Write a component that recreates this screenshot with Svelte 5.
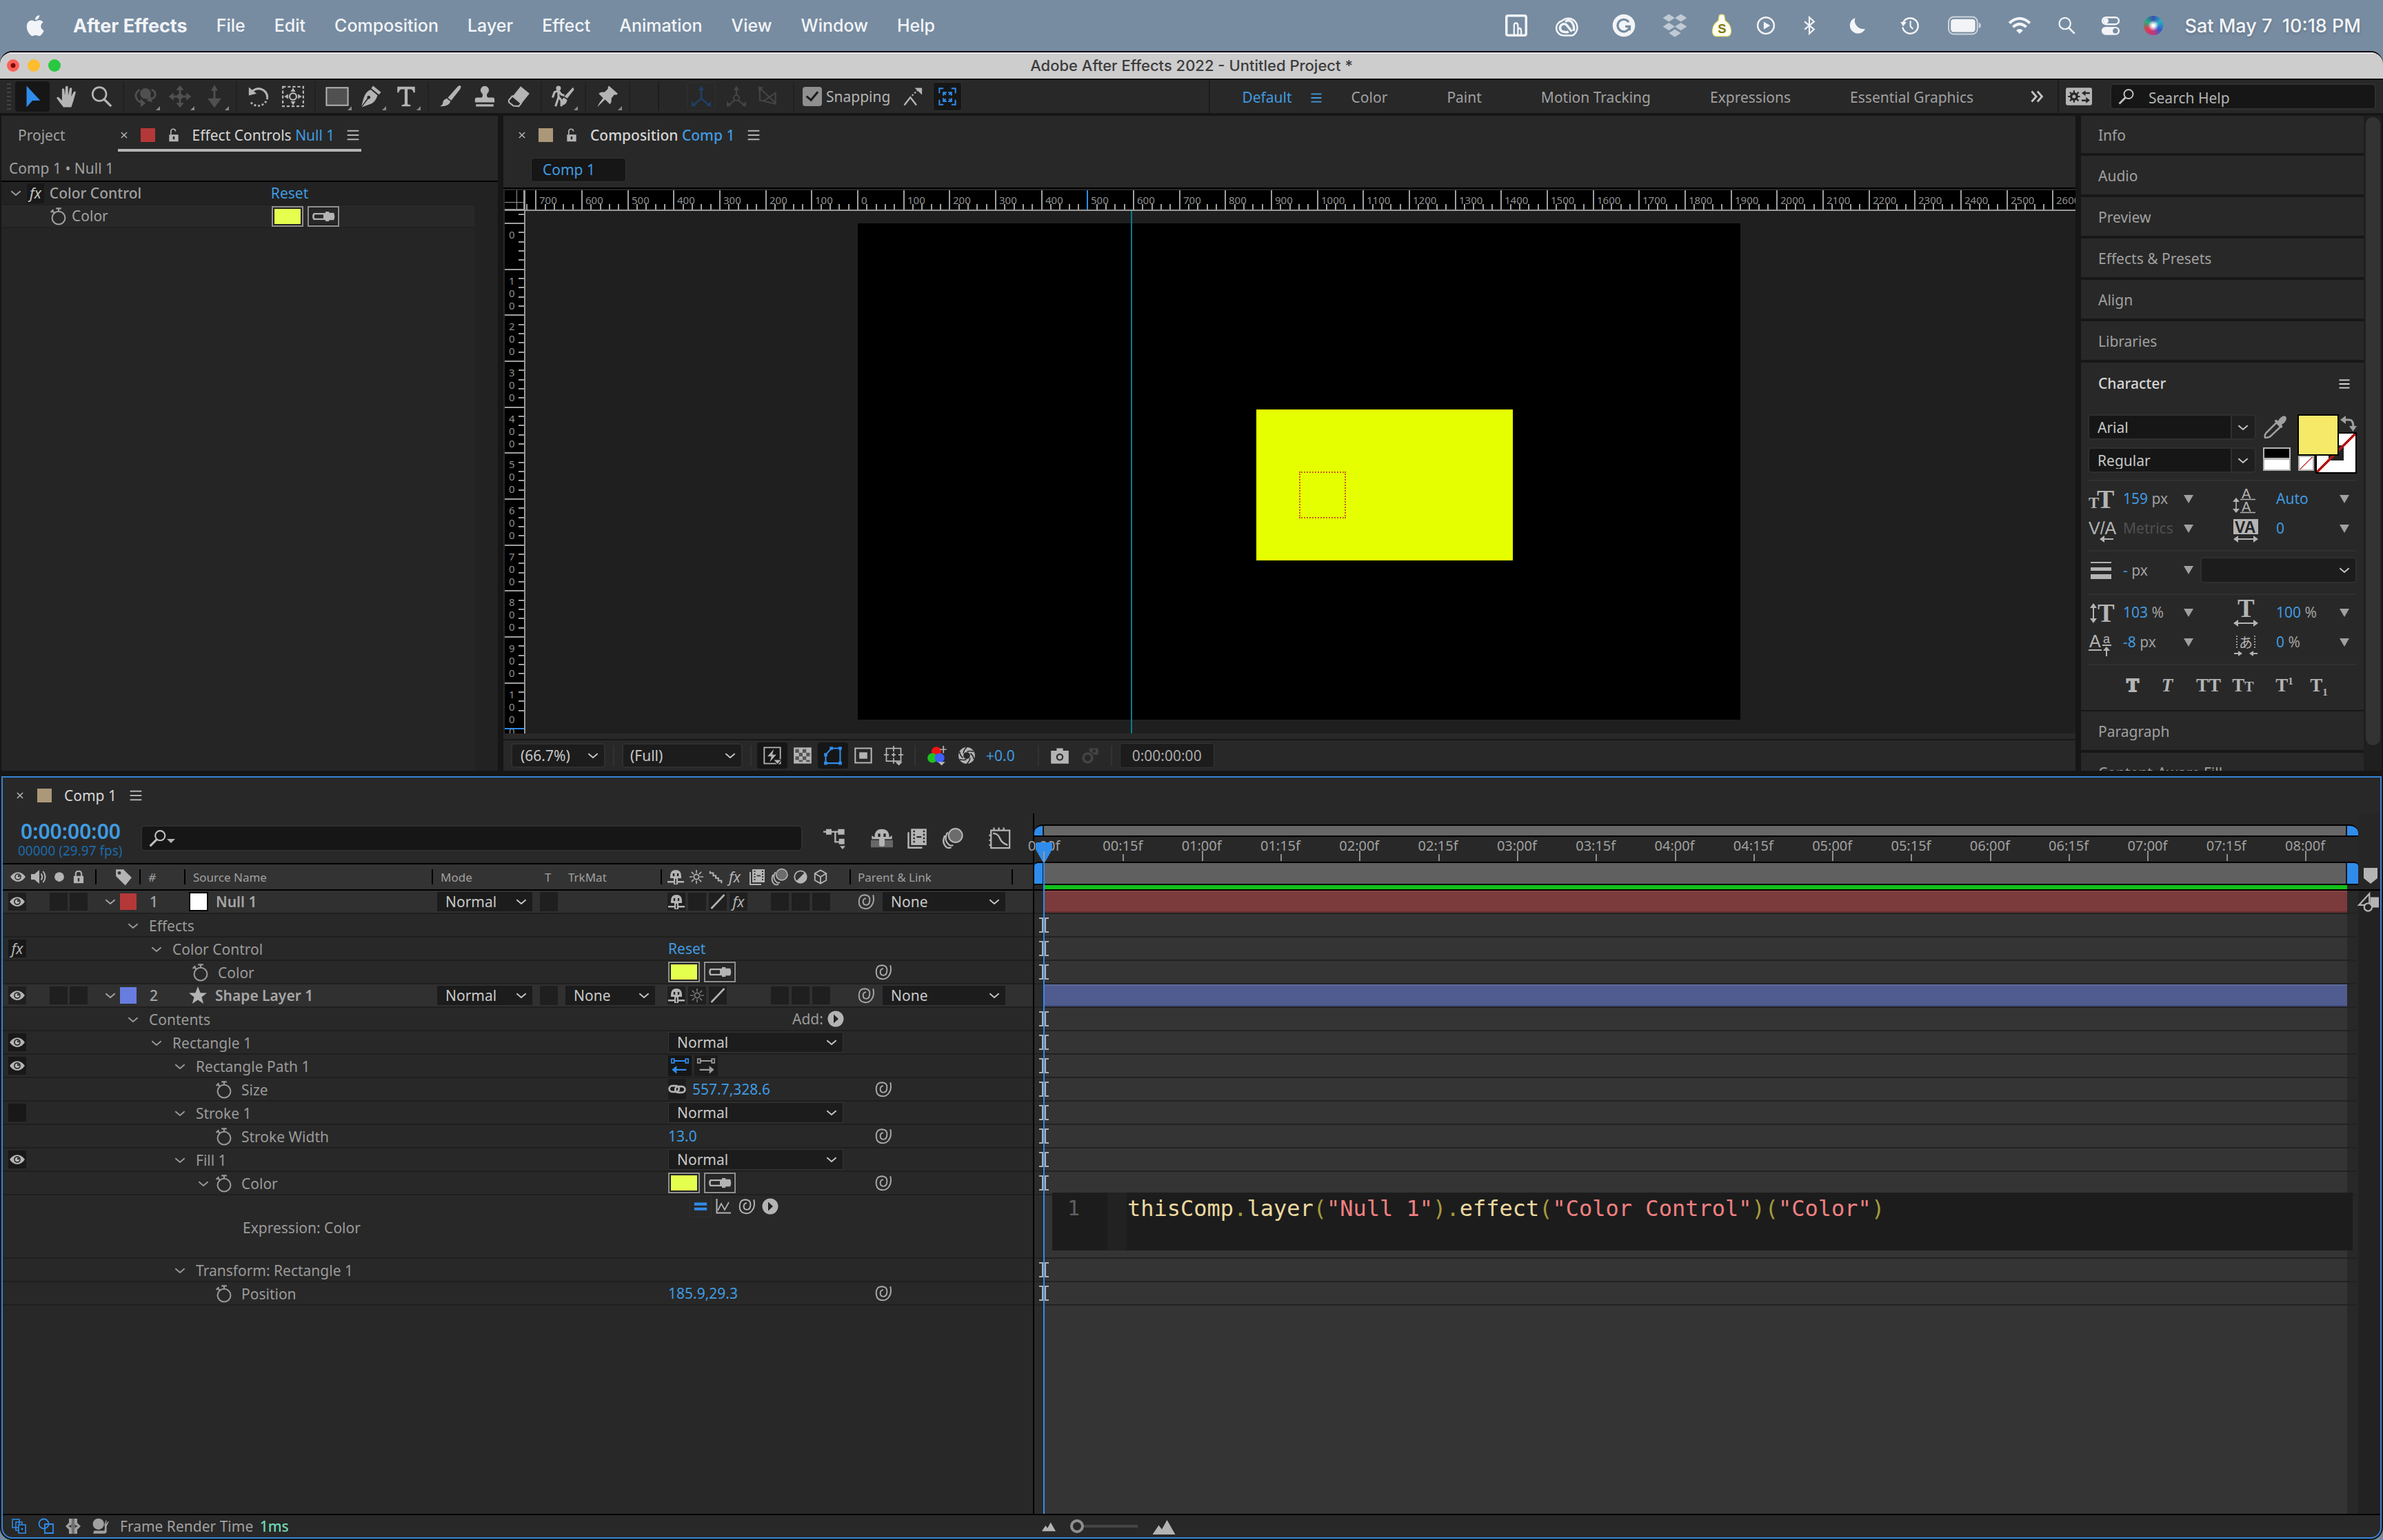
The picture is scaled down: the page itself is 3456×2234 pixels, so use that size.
<script lang="ts">
    type Prop = {
        kind: 'layer' | 'prop' | 'expression';
        name: string;
        level?: number;
        open?: boolean;
        watch?: boolean;
        eye?: 'on' | 'off';
        fx?: boolean;
        value?: 'reset' | 'swatch' | 'add' | 'blend' | 'path' | 'size' | 'number';
        text?: string;
        whip?: boolean;
        num?: number;
        color?: string;
        matte?: boolean;
    };

    const menus = ['File', 'Edit', 'Composition', 'Layer', 'Effect', 'Animation', 'View', 'Window', 'Help'];

    const statusIcons = [
        { name: 'notch', slot: 74, size: 38 },
        { name: 'cloud', slot: 76, size: 38 },
        { name: 'grammar', slot: 86, size: 34 },
        { name: 'dropbox', slot: 62, size: 38 },
        { name: 'bottle', slot: 74, size: 34 },
        { name: 'play', slot: 54, size: 30 },
        { name: 'bluetooth', slot: 72, size: 30 },
        { name: 'moon', slot: 68, size: 28 },
        { name: 'history', slot: 84, size: 30 },
        { name: 'battery', slot: 74, size: 50 },
        { name: 'wifi', slot: 86, size: 34 },
        { name: 'search', slot: 50, size: 28 },
        { name: 'control', slot: 78, size: 30 },
        { name: 'siri', slot: 46, size: 30 }
    ];

    const toolGroups = [
        [['select', 'Selection'], ['hand', 'Hand'], ['search', 'Zoom']],
        [['orbit', 'Orbit'], ['pan', 'Pan'], ['dolly', 'Dolly']],
        [['rotate', 'Rotation'], ['anchor', 'Pan Behind']],
        [['rect', 'Rectangle'], ['pen', 'Pen'], ['type', 'Type']],
        [['brush', 'Brush'], ['stamp', 'Clone Stamp'], ['eraser', 'Eraser']],
        [['roto', 'Roto Brush']],
        [['pin', 'Puppet Pin']]
    ];
    const cornered = ['orbit', 'pan', 'dolly', 'rect', 'pen', 'type', 'roto', 'pin'];

    const workspaces = ['Color', 'Paint', 'Motion Tracking', 'Expressions', 'Essential Graphics'];
    const panels = ['Info', 'Audio', 'Preview', 'Effects & Presets', 'Align', 'Libraries'];

    const rows: Prop[] = [
        { kind: 'layer', name: 'Null 1', num: 1, color: '#b53838' },
        { kind: 'prop', name: 'Effects', level: 1, open: true },
        { kind: 'prop', name: 'Color Control', level: 2, open: true, fx: true, value: 'reset' },
        { kind: 'prop', name: 'Color', level: 3, watch: true, value: 'swatch', whip: true },
        { kind: 'layer', name: 'Shape Layer 1', num: 2, color: '#677de0', matte: true },
        { kind: 'prop', name: 'Contents', level: 1, open: true, value: 'add' },
        { kind: 'prop', name: 'Rectangle 1', level: 2, open: true, eye: 'on', value: 'blend' },
        { kind: 'prop', name: 'Rectangle Path 1', level: 3, open: true, eye: 'on', value: 'path' },
        { kind: 'prop', name: 'Size', level: 4, watch: true, value: 'size', text: '557.7,328.6', whip: true },
        { kind: 'prop', name: 'Stroke 1', level: 3, open: true, eye: 'off', value: 'blend' },
        { kind: 'prop', name: 'Stroke Width', level: 4, watch: true, value: 'number', text: '13.0', whip: true },
        { kind: 'prop', name: 'Fill 1', level: 3, open: true, eye: 'on', value: 'blend' },
        { kind: 'prop', name: 'Color', level: 4, open: true, watch: true, value: 'swatch', whip: true },
        { kind: 'expression', name: 'Expression: Color' },
        { kind: 'prop', name: 'Transform: Rectangle 1', level: 3, open: true },
        { kind: 'prop', name: 'Position', level: 4, watch: true, value: 'number', text: '185.9,29.3', whip: true }
    ];

    // viewer geometry: origin in screen pixels, everything else in comp pixels
    const zoom = 2 / 3;
    const origin = { x: 482, y: 18 };
    const px = (v: number) => Math.round(v * zoom);
    const range = (from: number, to: number, step: number) =>
        Array.from({ length: Math.floor((to - from) / step) + 1 }, (_, i) => from + i * step);

    let viewWidth = 2248;
    let viewHeight = 758;
    $: hTicks = range(-720, (viewWidth - origin.x - 30) / zoom, 20);
    $: vTicks = range(-20, (viewHeight - origin.y - 30) / zoom, 20);

    // half-second marks over an 8s 08f work area
    const totalFrames = 248;
    const marks = range(0, 16, 1).map((i) => ({
        label: i === 0 ? '0:00f' : `0${Math.floor(i / 2)}:${i % 2 ? '15' : '00'}f`,
        left: ((i * 15) / totalFrames) * 100,
        whole: i % 2 === 0
    }));

    let snapping = true;
    let tool = 'select';
    let timeZoom = 0;

    const s = (w: number) => `fill="none" stroke="currentColor" stroke-width="${w}"`;
    const icons: Record<string, string> = {
        apple: '<path d="M16.4 12.7c0-2.3 1.9-3.4 2-3.5-1.100-1.600-2.800-1.800-3.400-1.800-1.400-.1-2.800.9-3.500.9s-1.800-.8-3-.8C7 7.500 5.600 8.400 4.800 9.800c-1.600 2.700-.4 6.800 1.200 9 .8 1.100 1.700 2.300 2.900 2.300s1.600-.7 3-.7 1.800.7 3 .7 2-1.100 2.800-2.200c.9-1.300 1.200-2.500 1.300-2.600-.1 0-2.500-1-2.600-3.600zM14.200 5.900c.6-.8 1-1.800.9-2.900-.9 0-2 .6-2.700 1.400-.6.7-1.100 1.700-.9 2.800 1 .1 2-.5 2.700-1.300z"/>',
        notch: `<rect x="3" y="3" width="18" height="18" rx="1.500" ${s(2.2)}/><path d="M10 21v-9q0-2.200 1.700-2.200T13.500 12v9M13.500 17q0-2.500 1.500-2.500T16.500 17v4" ${s(1.500)}/>`,
        cloud: `<path d="M8 21.200A6.800 6.800 0 0 1 6.500 7.800 8.300 8.300 0 1 1 16 21.200z" ${s(1.600)}/><path d="M12.500 17.500q-1.500 1-4 .3a3.600 3.600 0 1 1 2.500-6l4.500 5.700M9.500 8.500q3.500-2.500 6 .5 2.700 3.500 1.700 8" ${s(2.2)}/>`,
        grammar: '<circle cx="12" cy="12" r="11.500"/><path d="M17 8.500A6.200 6.200 0 1 0 18 13h-4.500M18 12.500V17" fill="none" stroke="#778ca1" stroke-width="2.200"/>',
        dropbox: '<path opacity=".6" d="M6.500 1.500 12 5 6.500 8.500 1 5zM17.500 1.500 23 5l-5.500 3.500L12 5zM6.500 9.500 12 13l-5.500 3.500L1 13zM17.500 9.500 23 13l-5.500 3.500L12 13zM12 15.500l5.500 3.500-5.500 3.500L6.500 19z"/>',
        bottle: '<path fill="#fffef0" stroke="#e8e46a" stroke-width=".8" d="M9.500 1.500q2.500-1.500 5 0l1 5.500q6 4 6 10.500 0 5-3.500 5.500H6q-3.500-.5-3.500-5.500Q2.500 11 8.500 7z"/><text x="8" y="20" font-family="Liberation Sans, sans-serif" font-size="13" font-weight="700" fill="#7d7a10" style="text-shadow: none">S</text>',
        play: `<circle cx="12" cy="12" r="9.500" ${s(2)}/><path d="M9.500 7.500 17 12l-7.500 4.500z"/>`,
        bluetooth: `<path d="m6.500 7.500 11 9L12 21.500v-19l5.500 5-11 9" ${s(1.7)}/>`,
        moon: '<path d="M9 2.500A10 10 0 1 0 21.500 16 10.500 10.500 0 0 1 9 2.500z"/>',
        history: `<path d="M4 9a9 9 0 1 1-.5 5" ${s(2)}/><path d="M1 8h7l-4 5z"/><path d="M12.500 6.500V13l3 3" ${s(1.700)}/>`,
        battery: `<rect x="1" y="6" width="20" height="12" rx="3.500" opacity=".7" ${s(1)}/><rect x="2.500" y="7.500" width="17" height="9" rx="2"/><path d="M22 10v4q1.500-.7 1.500-2T22 10z" opacity=".7"/>`,
        wifi: `<path d="M1.500 9.500q10.500-9.500 21 0M5.200 13.500q6.800-6 13.600 0" ${s(2.8)}/><path d="M8.500 17q3.500-3 7 0L12 20.500z"/>`,
        search: `<circle cx="10" cy="9.500" r="7" ${s(1.900)}/><path d="m15 15 7 7" ${s(2.300)}/>`,
        control: `<rect x="2.500" y="2.500" width="19" height="8" rx="4" ${s(2)}/><circle cx="6.500" cy="6.500" r="3"/><rect x="1.500" y="13.500" width="21" height="9.500" rx="4.700"/><circle cx="17.500" cy="18.200" r="3" fill="#778ca1"/>`,
        select: '<path d="m6 1 14 15-8 .3L6 23z"/>',
        hand: '<path d="M8.500 23Q5 18.500 1.500 13.500q1-1.800 3 0L7 16V4.500q1.300-1.500 2.300 0L10 11l.6-9q1.400-1.500 2.500 0l.3 9 1.500-7.500q1.500-1.200 2.300.2L16.500 12l2.600-5q1.600-.7 2 .7L18.500 17 16.500 23z"/>',
        orbit: `<circle cx="12" cy="9" r="5.500"/><path d="M6 5q-6 4-3 9.500 2 3 6 4M15 15q7-1 7-5t-4-5" ${s(2)}/><path d="m7 14 5 5-5 4zM17 11l-4 5 6 2z"/>`,
        pan: `<path d="M12 4v16M4 12h16" ${s(2)}/><path d="m12 .5 4 5H8zM12 23.500l4-5H8zM.5 12l5-4v8zM23.500 12l-5-4v8z"/><circle cx="12" cy="12" r="3"/>`,
        dolly: `<path d="M12 2v14" ${s(2)}/><path d="m12 0 3.500 6h-7zM5 14h14l-7 9.500z"/>`,
        rotate: `<path d="M4.500 8a9 9 0 0 1 16.500 5" ${s(2.2)}/><path d="M21 13a9.500 9.500 0 0 1-17.500 4" stroke-dasharray="2 2" ${s(2)}/><path d="M2 2.500V11l8-2z"/>`,
        anchor: `<rect x="1.500" y="2" width="21" height="20" stroke-dasharray="3 2" ${s(1.6)}/><circle cx="12" cy="12" r="3.500" ${s(1.6)}/><path d="m12 3 2.500 4h-5zM12 21l2.500-4h-5zM3 12l4-2.500v5zM21 12l-4-2.500v5z"/>`,
        rect: `<rect x="1" y="3" width="22" height="18" fill="#505050" stroke="currentColor" stroke-width="1.400"/>`,
        pen: '<path d="m13.500 1 8 6.500-2 2.500-8-6.500zM11 5l7 5.700Q16 18 10 20l-8 3 6.500-8.500a1.700 1.700 0 1 0-1-.8L1.500 22 4 13Q6 7 11 5z"/>',
        type: '<path d="M3 2h18v6h-1.500q-.5-3.500-3-3.500h-3V19q0 1.500 3 1.500V22H7.500v-1.500q3 0 3-1.500V4.500h-3Q5 4.500 4.500 8H3z"/>',
        brush: '<path d="M22.500 1q1 1-.5 3.500L13 16l-3.500-2.800L19.500 2q2-2 3-1zM8.500 14l3.700 3Q11 22.500 1.500 22q3-1.500 3-4t4-4z"/>',
        stamp: '<path d="M9.500 9a4.300 4.300 0 1 1 5 0q-1 2 .5 4h5q2 0 2 2v3H2v-3q0-2 2-2h5q1.500-2 .5-4zM3 20h18v2.200H3z"/>',
        eraser: `<path d="m13.500 1.500 9 7.500-8 10-9-7.500z"/><path d="m5 11.500 9 7.500-2.500 3-5.500-.5L1.500 18q-.5-2 0-2.500z" ${s(1.500)}/>`,
        roto: `<circle cx="7" cy="3.500" r="2.500"/><path d="m1 13 2-5.500 4-1.500 3 4 3 1M7 6.500V13l-3 9M7 12l3 4v6" ${s(2.2)}/><path d="m23 5-7 9-3-2 9-9.500zM12.500 13l3.500 2.500q-1 6-7 5.500 2-1 1.500-3.500t2-4.500z"/>`,
        pin: '<path d="m13.500 1 9 8q-1 2-3.500 1l-3 4q.5 4-1.500 6l-5-5-8 8q2-5 6-9.500L3 9q2-2 6-1.500L12.500 4q-.5-2 1-3z"/>',
        axes: `<path d="M12 3v11L4 21m8-7 8 7" ${s(2)}/><path d="m12 0 3 5H9zM1.500 23V17l5 5zM22.500 23V17l-5 5z"/>`,
        world: `<path d="M12 3v8M4 21l6-5m10 5-6-5" ${s(1.700)}/><circle cx="12" cy="13.500" r="3" ${s(1.600)}/><path d="m12 0 3 5H9zM1.500 23V17l5 5zM22.500 23V17l-5 5z"/>`,
        view: `<path d="M3 3v13l17 4V8L7 17M4 4l16 15" ${s(1.600)}/><path d="m1 1 6 1-5 5z"/>`,
        snapEdge: `<path d="m2 22 7-9 7 9" ${s(1.900)}/><path d="m11 11 7-7" stroke-dasharray="2 2" ${s(1.800)}/><path d="M14 2h8.500v8z"/>`,
        snapBox: `<path d="M2 8V2h5M17 2h5v6M2 16v6h5M17 22h5v-6M7 11V7h4M17 11V7h-4M7 14v4h4M17 14v4h-4M7 7l3 3M17 7l-3 3M7 18l3-3M17 18l-3-3" ${s(1.700)}/>`,
        more: `<path d="m3 3 8 9-8 9M13 3l8 9-8 9" ${s(3.400)}/>`,
        settings: '<rect y="4" width="24" height="16" rx="1.500"/><g fill="#282828"><circle cx="7.500" cy="12" r="3.800"/><path d="M6.800 6.500h1.400v11H6.800zM2 11.300h11v1.400H2z"/><path d="m3.200 8.500 1-1 8 8-1 1zM11.300 7.500l1 1-8 8-1-1z"/><path d="M18 6.500V8h4v1.600h-4v1.900l-3.500-2.700zM18.500 12.500v2.300h-4v1.600h4v1.900l3.500-2.900z"/></g><circle cx="7.500" cy="12" r="1.600"/>',
        find: `<circle cx="15" cy="8.500" r="6.500" ${s(2)}/><path d="m10.500 13.500-9 9" ${s(2.800)}/>`,
        lockOpen: `<path d="M7 11V6q0-4.500 4-4.500T15 5.500" ${s(2)}/><path d="M4 11h16v12H4z"/><path d="M12 14.500v5" stroke="#282828" stroke-width="3"/>`,
        lock: `<path d="M7 11V7q0-5 5-5t5 5v4" ${s(2.400)}/><path d="M3.500 10.500h17V23h-17z"/><path d="M12 14v6" stroke="#333" stroke-width="3"/>`,
        burger: `<path d="M2 4.500h20M2 12h20M2 19.500h20" ${s(2.400)}/>`,
        close: `<path d="m5 5 14 14M19 5 5 19" ${s(2.600)}/>`,
        chevron: `<path d="m2 8 10 8.500L22 8" ${s(2.800)}/>`,
        watch: `<circle cx="12" cy="14" r="8.700" ${s(1.900)}/><path d="M12 5.500V1M8.500 1.200h7M3 4l3.500 3.500M1.500 6.500 5 3" ${s(2)}/>`,
        dropper: '<path d="M2.500 8.600H14v6.800H2.500Q.3 12 2.500 8.600zm1 1.500q-.9 1.900 0 3.800H12v-3.800z" fill-rule="evenodd"/><path d="M14 7.300h3.500v1.200H22q1.700 3.500 0 7h-4.500v1.200H14z"/>',
        eye: '<path d="M0 12q5-7.500 12-7.500T24 12q-5 7.500-12 7.500T0 12zm12 5.300a5.300 5.300 0 1 0 0-10.600 5.300 5.300 0 0 0 0 10.600z" fill-rule="evenodd"/><circle cx="12" cy="12" r="3.600"/><circle cx="13.500" cy="10.800" r="1.600" fill="#1c1c1c"/>',
        speaker: `<path d="M1 8h5l7-6v20l-7-6H1z"/><path d="M15.500 7.500q3.500 4.500 0 9M18.500 4q6 8 0 16" ${s(2)}/>`,
        dot: '<circle cx="12" cy="12" r="7.500"/>',
        tag: '<path d="M2 2h10l11 11-8.500 10.500L2 11zm4.500 2.500a2.300 2.300 0 1 0 0 4.600 2.300 2.300 0 0 0 0-4.600z" fill-rule="evenodd"/>',
        star: '<path d="m12 0 3.300 8.500 8.700.2-7 5.500 2.600 8.800L12 18l-7.600 5L7 14.200 0 8.700l8.700-.2z"/>',
        shy: '<path d="M4 14V11q0-9 8-9t8 9v3h-5v4h9v2.500h-9V23H9v-2.500H0V18h9v-4z"/><path d="M9 7v4M15 7v4" stroke="#222" stroke-width="2.400"/><path d="M12 15v7" stroke="#222" stroke-width="1.600"/>',
        shyBig: '<path opacity=".45" d="M0 14h24v8H0z"/><path d="M1 13V9l3 2q0-9 8-9t8 9l3-2v4h-8v7q-3 2-6 0v-7z"/><path d="M9 7v3.500M15 7v3.500" stroke="#222" stroke-width="2.400"/>',
        sun: `<circle cx="12" cy="12" r="4" ${s(2)}/><path d="M12 1v5M12 18v5M1 12h5M18 12h5M4.200 4.200l3.500 3.500M16.300 16.300l3.500 3.500M4.200 19.800l3.500-3.500M16.300 7.700l3.500-3.500" ${s(1.800)}/>`,
        jag: `<path d="M2 3v3h5v4h4v4h4v4h5v4" ${s(2.200)}/>`,
        slash: `<path d="M2.500 22 21.500 2" ${s(2.600)}/>`,
        film: '<path d="M1 5h2v17h15v2H1z"/><path d="M5 1h18v19H5zm2.500 2v2h2V3zm0 4v2h2V7zm0 4v2h2v-2zm0 4v2h2v-2zM19 3v2h2V3zm0 4v2h2V7zm0 4v2h2v-2zm0 4v2h2v-2zM11.500 9.500v1.800h5.500V9.500z" fill-rule="evenodd"/>',
        blur: `<circle cx="15.500" cy="9" r="7.500" fill="#6c6c6c" stroke="currentColor" stroke-width="1.500"/><path d="M7 5.500Q2 14 9 19.500q2 1 4 0M4 9q-4 8 2 13 3 1 5 0" ${s(1.700)}/>`,
        half: `<circle cx="12" cy="12" r="9.500" ${s(2)}/><path d="M19 5 5 19a9.800 9.800 0 0 0 14-14z"/>`,
        cube: `<path d="m12 1.500 9 5v11l-9 5-9-5v-11zM3 6.500l9 5.500 9-5.500M12 12v10" ${s(2)}/>`,
        whip: `<path d="M21.500 3q2 9-2 14-3 4.500-8.500 4.500-8.500-.5-8.500-9.500Q2.500 3 10.500 3q6.500.3 6.500 6.500 0 7-5 7-4-.3-4-4.500 0-4 4-4.500" ${s(1.800)}/>`,
        add: '<circle cx="12" cy="12" r="11.500"/><path d="M9 5.500v13l7-6.500z" fill="#222"/>',
        chain: `<rect x="1.500" y="7.500" width="13" height="8" rx="4" ${s(2.600)}/><rect x="9.500" y="8.500" width="13" height="8" rx="4" ${s(2.600)}/>`,
        pathBack: `<path d="M4 6h16M6 17h14" ${s(1.800)}/><path d="M1.500 3.500h3.500v5H1.500zM19 3.500h3.500v5H19z" ${s(1.400)}/><path d="m2 17 6-5v10z"/>`,
        pathFwd: `<path d="M4 6h16M4 17h14" ${s(1.800)}/><path d="M1.500 3.500h3.500v5H1.500zM19 3.500h3.500v5H19z" ${s(1.400)}/><path d="m22 17-6-5v10z"/>`,
        equals: '<path d="M1 5.500h22v5H1zM1 14h22v5H1z"/>',
        graph: `<path d="M2.500 1v20.500H23" ${s(2)}/><path d="m4 18 5-10 5 9 6-11" ${s(1.700)}/>`,
        flow: `<path d="M0 5h20M13 5v11h7" ${s(1.800)}/><path d="M3 2h6v6H3zM16 2h7v6h-7zM17 12.500h6v6h-6zM18 20.500h6l-3 3.500z"/>`,
        curve: `<path d="M3 4h19v18H3zM6 1v3M11 1v3M16 1v3M1 9h2M1 14h2M1 19h2" ${s(1.600)}/><path d="M5 7q5 0 7 5t8 7" ${s(1.700)}/>`,
        marker: '<path d="M2 1h20v15l-10 8L2 16z"/>',
        shapes: `<path d="M14 6h10v12H14z"/><path d="M1 15 13 2v13z" ${s(1.800)}/><circle cx="11.500" cy="17.500" r="4.500" fill="#222" stroke="currentColor" stroke-width="1.800"/>`,
        draft: `<path d="M2 2h20v20H2z" ${s(1.600)}/><path d="M14 4 6 13h5l-2 7 8-9h-5z"/><path d="M13 17h11l-5.500 6z" stroke="#161616"/>`,
        checker: '<path d="M1 2h22v20H1z"/><path fill="#555" d="M3 4h4.500v4.500H3zM12 4h4.500v4.500H12zM7.500 8.500H12V13H7.500zM16.500 8.500H21V13h-4.500zM3 13h4.500v4.500H3zM12 13h4.500v4.500H12zM7.500 17.500H12V20H7.500zM16.500 17.500H21V20h-4.500z"/>',
        mask: `<path d="M3 21.500V11l7-8h11v18.500z" ${s(1.800)}/><path d="M1 19.500h4v4H1zM19 19.500h4v4h-4zM19 1h4v4h-4zM8 1h4v4H8zM1 9h4v4H1z"/>`,
        region: `<path d="M2 3h20v18H2z" ${s(1.800)}/><path d="M7 8h10v8H7z"/>`,
        grid: `<path d="M3 3h18v16H3zM12 0v7M12 15v7M0 11h6M18 11h6M12 8.500v5M9.500 11h5" ${s(1.500)}/><path d="M14 20h9l-4.500 4.500z"/>`,
        rgb: '<circle cx="12" cy="7" r="6" fill="#f01414"/><circle cx="7" cy="15" r="6" fill="#1fc01f"/><circle cx="16" cy="15" r="6" fill="#3f5fff"/><path d="M20 0h1.500v9H20zM16.500 3.800h8v1.400h-8z"/><path d="M14 20h9l-4.500 4.500z"/>',
        shutter: '<circle cx="12" cy="12" r="11"/><circle cx="12" cy="12" r="4.500" fill="#282828"/><path d="M12 1q-4 3-4.500 8M21.500 7q-5-2-9 0M21.500 17q-.5-5-4.500-8M12 23q4-3 4.500-8M2.500 17q5 2 9 0M2.500 7q.5 5 4.500 8" fill="none" stroke="#282828" stroke-width="1.500"/>',
        camera: '<path d="M8 3h8v3h7v16H1V6h7zm4 6.500a4.500 4.500 0 1 0 0 9 4.500 4.500 0 0 0 0-9z" fill-rule="evenodd"/><circle cx="12" cy="14" r="2.700"/>',
        showSnap: `<circle cx="9" cy="15" r="5.500" ${s(3)}/><path d="M11 3h11v8h-6q-1-3-5-4z"/><circle cx="17" cy="6.500" r="2" fill="#282828"/>`,
        eyedrop: `<path d="m13 8 4 4L7 21.500q-3 1.500-5 1-.8-2.200 1-4.500z" ${s(1.700)}/><path d="M11 6.500 12.500 5l2 1.500Q17 2 20.500 1.500 23 2 22.500 5q-1 3-4.500 5l1 2-1.500 1.500z"/>`,
        swap: `<path d="M7 6h6q6 0 6 10" ${s(3)}/><path d="m0 6 8-6v12zM13 15h11l-5.500 8z"/>`,
        layersFoot: `<path d="M2 2h10v12H2zM7 6h9v12H7z" ${s(1.500)}/><path d="M11 10h10v12H11z" fill="#222" stroke="currentColor" stroke-width="1.700"/><circle cx="16" cy="16" r="1.500"/>`,
        modesFoot: `<circle cx="8.500" cy="8.500" r="7" ${s(1.800)}/><path d="M10 9h12v13H10z" ${s(1.800)}/>`,
        bracesFoot: '<path d="M9 1h6v22H9z" opacity=".6"/><path d="M6 1h4v6q0 4-5 5 5 1 5 5v6H6v-6L1 12l5-5zM18 1h-4v6q0 4 5 5-5 1-5 5v6h4v-6l5-5-5-5z"/>',
        snailFoot: '<circle cx="9" cy="9" r="7.500"/><path d="M3 18h14q1-5 0-8l2-6 1 .5-1 5 3-4 1 .5-3 6v7q0 3-4 3H2z"/>',
        hill: '<path d="m1 20 6-9 3 4 5-9 8 14z"/>'
    };

    // Character panel glyphs, on a 40x40 grid
    const bold = 'font-family="Liberation Serif, serif" font-weight="700"';
    const plain = 'font-family="Liberation Sans, sans-serif"';
    const glyphs: Record<string, string> = {
        size: `<text x="0" y="33" font-size="23" ${bold}>T</text><text x="12" y="33" font-size="38" ${bold}>T</text>`,
        lead: `<text x="14" y="19" font-size="20" ${plain}>A</text><text x="14" y="38" font-size="20" ${plain}>A</text><path d="M12 20.500h22M12 39.500h22M6 22v15" ${s(1.600)}/><path d="m6 18 5 6H1zM6 40l5-6H1z"/>`,
        kern: `<text x="0" y="28" font-size="25" ${plain}>V/A</text><path d="M20 35h16" ${s(2)}/><path d="m16 35 7-5v10z"/>`,
        track: `<path d="M2 6h36v22H2z"/><text x="4" y="26" font-size="23" font-weight="700" fill="#222" ${plain}>VA</text><path d="M7 35h26" ${s(2)}/><path d="m2 35 7-5v10zM38 35l-7-5v10z"/>`,
        stroke: '<path d="M3 8h30v2H3zM3 16h30v5H3zM3 26h30v7H3z"/>',
        vscale: `<text x="13" y="33" font-size="37" ${bold}>T</text><path d="M7 12v18" ${s(2)}/><path d="m7 6 5 7H2zM7 35l5-7H2z"/>`,
        hscale: `<text x="8" y="26" font-size="37" ${bold}>T</text><path d="M7 35h26" ${s(2)}/><path d="m2 35 7-5v10zM38 35l-7-5v10z"/>`,
        shift: `<text x="1" y="27" font-size="25" ${plain}>A</text><text x="21" y="21" font-size="18" ${plain}>a</text><path d="M0 31h19M20 24h13M26 40V29" ${s(2)}/><path d="m26 26 5 6H21z"/>`,
        tsume: `<text x="10" y="28" font-size="20" font-family="Noto Sans CJK JP, sans-serif">あ</text><path d="M7 10v20M33 10v20" stroke-dasharray="2 2" ${s(1.600)}/><path d="M3 36h8M29 36h8" ${s(2)}/><path d="m15 36-6-4v8zM25 36l6-4v8z"/>`
    };
</script>

{#snippet icon(name: string, size = 24)}
    <svg class="icon" viewBox="0 0 24 24" width={size} height={size} fill="currentColor" aria-hidden="true">{@html icons[name]}</svg>
{/snippet}

{#snippet select(label: string, value: string, kind: string)}
    <span class="select {kind}">
        <select aria-label={label}><option>{value}</option></select>
        {@render icon('chevron', 16)}
    </span>
{/snippet}

{#snippet swatch()}
    <span class="swatches">
        <button class="swatch" aria-label="Color"></button>
        <button class="pick" aria-label="Pick color">{@render icon('dropper', 36)}</button>
    </span>
{/snippet}

{#snippet charValue(glyph: string, label: string, value: string, unit: string)}
    <div class="char-cell">
        <svg class="char-icon" viewBox="0 0 40 40" width="40" height="40" fill="currentColor" aria-hidden="true">{@html glyphs[glyph]}</svg>
        <button class="char-num" aria-label={label}><span class:dim={label === 'Kerning'}>{value}</span> {unit}</button>
        <button class="arrow" aria-label="{label} presets"></button>
    </div>
{/snippet}

<div class="desktop">
    <header class="menubar">
        <nav>
            <button class="apple" aria-label="Apple">{@render icon('apple', 40)}</button>
            <button class="app">After Effects</button>
            {#each menus as menu}<button>{menu}</button>{/each}
        </nav>
        <div class="status">
            {#each statusIcons as item}
                <span class="slot" style="width: {item.slot}px">
                    {#if item.name === 'siri'}<span class="siri"></span>{:else}{@render icon(item.name, item.size)}{/if}
                </span>
            {/each}
            <time>Sat May 7&nbsp; 10:18 PM</time>
        </div>
    </header>

    <div class="window">
        <div class="titlebar">
            <div class="lights">
                <button class="red" aria-label="Close"></button>
                <button class="amber" aria-label="Minimize"></button>
                <button class="green" aria-label="Zoom"></button>
            </div>
            <h1>Adobe After Effects 2022 - Untitled Project *</h1>
        </div>

        <div class="toolbar">
            <span class="grip"></span>
            {#each toolGroups as group, g}
                <div class="tools" class:faded={g === 1}>
                    {#each group as [name, label]}
                        <button class="tool" class:active={tool === name} class:corner={cornered.includes(name)} aria-label={label} on:click={() => (tool = name)}>
                            {@render icon(name, 34)}
                        </button>
                    {/each}
                </div>
            {/each}
            <div class="axes">
                <span class="boxed">{@render icon('axes', 32)}</span>
                {@render icon('world', 32)}
                {@render icon('view', 32)}
            </div>
            <div class="snap">
                <label><input type="checkbox" bind:checked={snapping} />Snapping</label>
                {@render icon('snapEdge', 30)}
                <span class="boxed">{@render icon('snapBox', 28)}</span>
            </div>
            <nav class="workspaces">
                <button class="current">Default</button>
                <button class="current ws-menu" aria-label="Workspace menu">{@render icon('burger', 18)}</button>
                {#each workspaces as name}<button>{name}</button>{/each}
            </nav>
            <button class="more" aria-label="More workspaces">{@render icon('more', 20)}</button>
            <div class="help">
                {@render icon('settings', 38)}
                <label class="searchbox">
                    {@render icon('find', 24)}
                    <input type="text" placeholder="Search Help" aria-label="Search Help" />
                </label>
            </div>
        </div>

        <div class="upper">
            <section class="panel effects">
                <div class="tabs">
                    <button class="project">Project</button>
                    <div class="tab underlined">
                        {@render icon('close', 14)}
                        <span class="chip red-chip"></span>
                        {@render icon('lockOpen', 20)}
                        <span class="tab-title">Effect Controls <span class="blue">Null 1</span></span>
                        {@render icon('burger', 20)}
                    </div>
                </div>
                <p class="crumb">Comp 1 • Null 1</p>
                <div class="effect-body">
                    <div class="effect-list">
                        <div class="effect-row head">
                            {@render icon('chevron', 16)}
                            <span class="fx dark">fx</span>
                            <span class="effect-name">Color Control</span>
                            <a href="#reset">Reset</a>
                        </div>
                        <div class="effect-row">
                            <span class="effect-watch">{@render icon('watch', 26)}</span>
                            <span class="effect-prop">Color</span>
                            {@render swatch()}
                        </div>
                    </div>
                    <div class="effect-gutter"></div>
                </div>
            </section>

            <section class="panel comp">
                <div class="tabs">
                    <div class="tab">
                        {@render icon('close', 14)}
                        <span class="chip tan-chip"></span>
                        {@render icon('lockOpen', 20)}
                        <span class="tab-title strong">Composition <span class="blue">Comp 1</span></span>
                        {@render icon('burger', 20)}
                    </div>
                </div>
                <div class="flowbar"><button>Comp 1</button></div>
                <div class="viewer">
                    <div class="ruler-corner"></div>
                    <svg class="ruler-h" aria-hidden="true">
                        {#each hTicks as t}
                            <line x1={origin.x + px(t)} x2={origin.x + px(t)} y1={t % 100 === 0 ? 0 : 20} y2="30" class:mark={t === 500} />
                            {#if t % 100 === 0}<text x={origin.x + px(t) + 5} y="20">{Math.abs(t)}</text>{/if}
                        {/each}
                    </svg>
                    <svg class="ruler-v" aria-hidden="true">
                        {#each vTicks as t}
                            <line x1={t % 100 === 0 ? 0 : 20} x2="30" y1={origin.y + px(t)} y2={origin.y + px(t)} />
                            {#if t % 100 === 0}
                                {#each String(t).split('') as digit, i}
                                    <text x="6" y={origin.y + px(t) + 22 + i * 18}>{digit}</text>
                                {/each}
                            {/if}
                        {/each}
                        <line class="mark" x1="0" x2="30" y1={origin.y + px(1100)} y2={origin.y + px(1100)} />
                    </svg>
                    <div class="viewport" bind:clientWidth={viewWidth} bind:clientHeight={viewHeight}>
                        <div class="stage" style="left: {origin.x}px; top: {origin.y}px; width: {px(1920)}px; height: {px(1080)}px">
                            <div class="shape" style="left: {px(867)}px; top: {px(405)}px; width: {px(558)}px; height: {px(329)}px"></div>
                            <div class="null" style="left: {px(960)}px; top: {px(540)}px; width: {px(102)}px; height: {px(102)}px"></div>
                        </div>
                        <div class="guide" style="left: {origin.x + px(594)}px"></div>
                    </div>
                </div>
                <div class="viewbar">
                    {@render select('Magnification', '(66.7%)', 'zoom')}
                    <i></i>
                    {@render select('Resolution', '(Full)', 'res')}
                    <i></i>
                    <div class="viewtools">
                        <button class="dark" aria-label="Fast previews">{@render icon('draft', 28)}</button>
                        <button aria-label="Transparency grid">{@render icon('checker', 28)}</button>
                        <button class="dark lit" aria-label="Mask visibility">{@render icon('mask', 28)}</button>
                        <button aria-label="Region of interest">{@render icon('region', 28)}</button>
                        <button aria-label="Grid and guides">{@render icon('grid', 28)}</button>
                    </div>
                    <i></i>
                    <div class="viewtools exposure">
                        <button aria-label="Channels">{@render icon('rgb', 28)}</button>
                        <button aria-label="Reset exposure">{@render icon('shutter', 26)}</button>
                        <a href="#exposure">+0.0</a>
                    </div>
                    <i></i>
                    <div class="viewtools">
                        <button aria-label="Take snapshot">{@render icon('camera', 28)}</button>
                        <button class="off" aria-label="Show snapshot">{@render icon('showSnap', 28)}</button>
                    </div>
                    <i></i>
                    <button class="timebox">0:00:00:00</button>
                </div>
            </section>

            <section class="panel side">
                <div class="side-list">
                    {#each panels as name}<h2>{name}</h2>{/each}
                    <div class="character">
                        <h2 class="on">Character {@render icon('burger', 18)}</h2>
                        <div class="fonts">
                            <div class="font-selects">
                                {@render select('Font family', 'Arial', 'font')}
                                {@render select('Font style', 'Regular', 'font')}
                            </div>
                            <div class="font-pick">
                                {@render icon('eyedrop', 36)}
                                <button class="bw" aria-label="Black or white"></button>
                            </div>
                            <div class="fillstroke">
                                <button class="stroke" aria-label="Stroke color"></button>
                                <button class="fill" aria-label="Fill color"></button>
                                <button class="none" aria-label="No color"></button>
                                <span class="swap">{@render icon('swap', 24)}</span>
                            </div>
                        </div>
                        <div class="char-grid">
                            {@render charValue('size', 'Font size', '159', 'px')}
                            {@render charValue('lead', 'Leading', 'Auto', '')}
                            {@render charValue('kern', 'Kerning', 'Metrics', '')}
                            {@render charValue('track', 'Tracking', '0', '')}
                        </div>
                        <div class="char-grid single">
                            {@render charValue('stroke', 'Stroke width', '-', 'px')}
                            {@render select('Stroke order', '', 'order')}
                        </div>
                        <div class="char-grid">
                            {@render charValue('vscale', 'Vertical scale', '103', '%')}
                            {@render charValue('hscale', 'Horizontal scale', '100', '%')}
                            {@render charValue('shift', 'Baseline shift', '-8', 'px')}
                            {@render charValue('tsume', 'Tsume', '0', '%')}
                        </div>
                        <div class="faux">
                            <button class="heavy">T</button>
                            <button><em>T</em></button>
                            <button>TT</button>
                            <button>T<small>T</small></button>
                            <button>T<sup>1</sup></button>
                            <button>T<sub>1</sub></button>
                        </div>
                    </div>
                    <h2>Paragraph</h2>
                    <h2>Content-Aware Fill</h2>
                </div>
                <div class="side-scroll"><span></span></div>
            </section>
        </div>

        <section class="timeline">
            <div class="tab comp-tab">
                {@render icon('close', 14)}
                <span class="chip tan-chip"></span>
                <span class="tab-title">Comp 1</span>
                {@render icon('burger', 20)}
            </div>

            <div class="time-body">
                <div class="outline">
                    <div class="time-controls">
                        <div class="timecode"><strong>0:00:00:00</strong><span>00000 (29.97 fps)</span></div>
                        <label class="searchbox">
                            {@render icon('find', 26)}<span class="tri"></span>
                            <input type="text" aria-label="Search layers" />
                        </label>
                        <div class="comp-switches">
                            <button aria-label="Mini-flowchart">{@render icon('flow', 32)}</button>
                            <button aria-label="Shy">{@render icon('shyBig', 32)}</button>
                            <button aria-label="Frame blending">{@render icon('film', 30)}</button>
                            <button aria-label="Motion blur">{@render icon('blur', 32)}</button>
                            <button class="apart" aria-label="Graph editor">{@render icon('curve', 34)}</button>
                        </div>
                    </div>

                    <div class="columns">
                        <span class="c-av">
                            {@render icon('eye', 22)}{@render icon('speaker', 24)}{@render icon('dot', 22)}{@render icon('lock', 20)}
                        </span>
                        <span class="c-label">{@render icon('tag', 26)}</span>
                        <span class="c-num">#</span>
                        <span class="c-name">Source Name</span>
                        <span class="c-mode"><span>Mode</span><span>T</span><span>TrkMat</span></span>
                        <span class="c-switch">
                            {@render icon('shy', 24)}{@render icon('sun', 22)}{@render icon('jag', 22)}<em>fx</em>{@render icon('film', 24)}{@render icon('blur', 26)}{@render icon('half', 22)}{@render icon('cube', 22)}
                        </span>
                        <span class="c-parent">Parent &amp; Link</span>
                    </div>

                    {#each rows as row}
                        {#if row.kind === 'layer'}
                            <div class="row layer">
                                <div class="av">
                                    <span class="box">{@render icon('eye', 22)}</span>
                                    <span class="box push"></span><span class="box"></span>
                                </div>
                                <div class="layer-name">
                                    {@render icon('chevron', 16)}
                                    <span class="layer-chip" style="background: {row.color}"></span>
                                    <span class="layer-num">{row.num}</span>
                                    {#if row.num === 1}<span class="solid-icon"></span>{:else}<span class="star-icon">{@render icon('star', 26)}</span>{/if}
                                    <span>{row.name}</span>
                                </div>
                                <div class="modes">
                                    {@render select('Mode', 'Normal', 'mode')}
                                    <span class="box"></span>
                                    {#if row.matte}{@render select('Track matte', 'None', 'matte')}{/if}
                                </div>
                                <div class="switches">
                                    <span class="box">{@render icon('shy', 24)}</span>
                                    <span class="box" class:mute={row.matte}>{#if row.matte}{@render icon('sun', 22)}{/if}</span>
                                    <span class="box">{@render icon('slash', 24)}</span>
                                    {#if row.matte}<span class="box clear"></span>{:else}<span class="box fx">fx</span>{/if}
                                    <span class="box clear"></span>
                                    <span class="box"></span><span class="box"></span><span class="box"></span>
                                </div>
                                <div class="parent">
                                    {@render icon('whip', 26)}
                                    {@render select('Parent', 'None', 'link')}
                                </div>
                            </div>
                        {:else if row.kind === 'prop'}
                            <div class="row">
                                <div class="av">
                                    {#if row.fx}<span class="box fx dark">fx</span>{/if}
                                    {#if row.eye}<span class="box dark">{#if row.eye === 'on'}{@render icon('eye', 22)}{/if}</span>{/if}
                                </div>
                                <div class="prop-name" style="padding-left: {12 + 34 * (row.level ?? 1)}px">
                                    <span class="twirl">{#if row.open}{@render icon('chevron', 16)}{/if}</span>
                                    {#if row.watch}<span class="watch">{@render icon('watch', 26)}</span>{/if}
                                    <span>{row.name}</span>
                                </div>
                                <div class="prop-value">
                                    {#if row.value === 'reset'}<a href="#reset">Reset</a>
                                    {:else if row.value === 'swatch'}{@render swatch()}
                                    {:else if row.value === 'add'}<button class="adder">Add: {@render icon('add', 24)}</button>
                                    {:else if row.value === 'blend'}{@render select('Blend mode', 'Normal', 'blend')}
                                    {:else if row.value === 'path'}
                                        <button class="dir lit" aria-label="Reverse path off">{@render icon('pathBack', 28)}</button>
                                        <button class="dir" aria-label="Reverse path on">{@render icon('pathFwd', 28)}</button>
                                    {:else if row.value === 'size'}<span class="link-box">{@render icon('chain', 26)}</span><a href="#value">{row.text}</a>
                                    {:else if row.text}<a href="#value">{row.text}</a>{/if}
                                </div>
                                {#if row.whip}{@render icon('whip', 26)}{/if}
                            </div>
                        {:else}
                            <div class="row expression">
                                <span class="exp-name">{row.name}</span>
                                <div class="exp-tools">
                                    <button class="eq" aria-label="Enable expression">{@render icon('equals', 20)}</button>
                                    <button aria-label="Show graph">{@render icon('graph', 24)}</button>
                                    <button aria-label="Pick whip">{@render icon('whip', 26)}</button>
                                    <button aria-label="Expression language menu">{@render icon('add', 24)}</button>
                                </div>
                            </div>
                        {/if}
                    {/each}
                </div>

                <div class="graph">
                    <div class="navigator"><span></span></div>
                    <div class="time-ruler">
                        {#each marks as mark}
                            <span class="time-mark" class:whole={mark.whole} style="left: {mark.left}%">{mark.label}</span>
                        {/each}
                    </div>
                    <div class="workarea"><span></span></div>
                    <div class="cache"><span></span></div>
                    <div class="tracks">
                        {#each rows as row}
                            <div class="track {row.kind}">
                                {#if row.kind === 'layer'}
                                    <span class="clip" class:second={row.matte}></span>
                                {:else if row.kind === 'prop'}
                                    <svg class="ibeam" viewBox="0 0 14 22" width="14" height="22" aria-hidden="true"><path d="M0 1h14M0 21h14M5 1v20M9 1v20" fill="none" stroke="#b0b0b0" stroke-width="2" /></svg>
                                {:else}
                                    <div class="editor">
                                        <span class="line-no">1</span>
                                        <code>thisComp<s>.</s>layer<s>(</s><q>"Null 1"</q><s>).</s>effect<s>(</s><q>"Color Control"</q><s>)(</s><q>"Color"</q><s>)</s></code>
                                    </div>
                                {/if}
                            </div>
                        {/each}
                    </div>
                    <div class="playhead"><svg viewBox="0 0 24 28" width="24" height="28" aria-hidden="true"><path d="M0 2q0-2 2-2h20q2 0 2 2v8L14 28h-4L0 10z" fill="#2f8ceb" /><path d="M12 13v15" stroke="#9a9a9a" stroke-width="2" /></svg></div>
                </div>

                <div class="markers">
                    <span class="comp-marker">{@render icon('marker', 24)}</span>
                    <span class="button-marker">{@render icon('shapes', 30)}</span>
                </div>
            </div>

            <footer>
                <div class="foot-left">
                    <span class="lit">{@render icon('layersFoot', 24)}</span>
                    <span class="lit">{@render icon('modesFoot', 24)}</span>
                    {@render icon('bracesFoot', 24)}
                    {@render icon('snailFoot', 26)}
                    <span>Frame Render Time <b>1ms</b></span>
                </div>
                <div class="foot-zoom">
                    {@render icon('hill', 22)}
                    <input type="range" min="0" max="100" bind:value={timeZoom} aria-label="Time zoom" />
                    {@render icon('hill', 36)}
                </div>
            </footer>
        </section>
    </div>
</div>

<style>
    :global(body) {
        margin: 0;
        background: #778ca1;
    }

    .desktop {
        --blue: #409be0;
        --text: #a0a0a0;
        --bright: #d6d6d6;
        --panel: #282828;
        --gap: #161616;
        display: flex;
        flex-direction: column;
        height: 100vh;
        font: 21px/1 "Noto Sans", sans-serif;
        color: var(--text);
        overflow: hidden;
    }

    button,
    input,
    select {
        font: inherit;
        color: inherit;
        background: none;
        border: 0;
        padding: 0;
        margin: 0;
        outline: 0;
    }

    button,
    span,
    a {
        white-space: nowrap;
    }

    h1, h2, p {
        margin: 0;
        font-weight: 400;
        font-size: inherit;
    }

    a {
        color: var(--blue);
        text-decoration: none;
    }

    .icon {
        display: block;
        flex: none;
        overflow: visible;
    }

    .blue { color: var(--blue); }

    .lit { color: #2f8ceb; }

    /* menu bar */
    .menubar {
        flex: none;
        display: flex;
        justify-content: space-between;
        align-items: center;
        height: 74px;
        padding: 0 32px;
        background: #778ca1;
        color: #f2f4f7;
        font: 500 25px/1 Inter, sans-serif;
        text-shadow: 0 2px 4px rgb(0 0 0 / 0.2);
    }

    .menubar nav {
        display: flex;
        align-items: center;
        gap: 42px;
    }

    .menubar .apple { margin-right: -8px; }

    .menubar .app {
        font-size: 27px;
        font-weight: 700;
    }

    .status {
        display: flex;
        align-items: center;
    }

    .slot {
        display: flex;
        justify-content: center;
    }

    .siri {
        width: 28px;
        height: 28px;
        border-radius: 50%;
        background: radial-gradient(circle at 50% 50%, #fff 8%, transparent 40%), conic-gradient(#3a4fb0, #2ab0c0, #2a5fd0, #c03a80, #e03a50, #1fb080, #3a4fb0);
    }

    .status time {
        padding-left: 23px;
        font-size: 27px;
        white-space: nowrap;
    }

    /* window */
    .window {
        flex: 1;
        min-height: 0;
        display: flex;
        flex-direction: column;
        background: var(--gap);
        border-top: 2px solid #000;
        border-radius: 18px;
        overflow: hidden;
        padding-bottom: 2px;
    }

    .titlebar {
        flex: none;
        display: grid;
        grid-template-columns: 1fr auto 1fr;
        align-items: center;
        height: 38px;
        background: #cdcdcd;
        border-bottom: 2px solid #000;
        box-shadow: inset 0 2px #e9e3ee;
        color: #3c3c3c;
        font: 500 22px/1 Inter, sans-serif;
    }

    .titlebar h1 { font-weight: 500; }

    .lights {
        display: flex;
        gap: 12px;
        padding-left: 10px;
    }

    .lights button {
        width: 18px;
        height: 18px;
        border-radius: 50%;
    }

    .red { background: radial-gradient(circle, #7a0c08 3px, #ff5f57 4px); }
    .amber { background: #febc2e; }
    .green { background: #28c840; }

    .toolbar {
        flex: none;
        display: flex;
        align-items: center;
        height: 48px;
        background: var(--panel);
        color: #b4b4b4;
    }

    .grip {
        width: 6px;
        height: 38px;
        margin-left: 10px;
        background: repeating-linear-gradient(#444 0 2px, transparent 2px 6px);
    }

    .tools {
        display: flex;
        padding: 0 6px;
        border-right: 2px solid #212121;
    }

    .faded { color: #505050; }

    .tool {
        position: relative;
        display: flex;
        align-items: center;
        justify-content: center;
        width: 50px;
        height: 44px;
        border-radius: 4px;
    }

    .tool.active {
        color: #2f8ceb;
        background: #161616;
    }

    .corner::after {
        content: '';
        position: absolute;
        right: 4px;
        bottom: 2px;
        border: 3px solid;
        border-color: transparent #8a8a8a #8a8a8a transparent;
    }

    .axes {
        display: flex;
        align-items: center;
        gap: 14px;
        margin-left: 40px;
        padding: 0 20px 0 40px;
        border-left: 2px solid #1c1c1c;
        border-right: 2px solid #212121;
        color: #444;
    }

    .boxed {
        display: flex;
        align-items: center;
        justify-content: center;
        width: 42px;
        height: 42px;
        border-radius: 4px;
        border: 1px solid #303030;
        color: #1f3f66;
        box-sizing: border-box;
    }

    .snap {
        display: flex;
        align-items: center;
        gap: 14px;
        padding-left: 12px;
    }

    .snap label {
        display: flex;
        align-items: center;
        gap: 6px;
        margin-right: 4px;
    }

    .snap input {
        appearance: none;
        position: relative;
        width: 28px;
        height: 28px;
        border-radius: 4px;
        background: #8f8f8f;
    }

    .snap input:checked::after {
        content: '';
        position: absolute;
        left: 9px;
        top: 3px;
        width: 7px;
        height: 14px;
        border: solid #1c1c1c;
        border-width: 0 3px 3px 0;
        transform: rotate(40deg);
    }

    .snap .boxed {
        background: #161616;
        color: #2f8ceb;
    }

    .workspaces {
        display: flex;
        align-items: center;
        align-self: stretch;
        gap: 86px;
        margin-left: 358px;
        padding: 3px 0 0 46px;
        border-left: 2px solid #1c1c1c;
        color: var(--text);
    }

    .workspaces .current { color: var(--blue); }

    .workspaces .ws-menu { margin: 0 -44px 0 -60px; }

    .more {
        margin-left: auto;
        padding-right: 20px;
        color: #c4c4c4;
    }

    .help {
        display: flex;
        align-items: center;
        align-self: stretch;
        gap: 26px;
        padding: 0 10px;
        border-left: 2px solid #1c1c1c;
    }

    .searchbox {
        display: flex;
        align-items: center;
        box-sizing: border-box;
        height: 38px;
        padding: 0 10px;
        background: #161616;
        border: 2px solid #2f2f2f;
        border-radius: 6px;
        color: #c0c0c0;
    }

    .help .searchbox { width: 386px; gap: 20px; }

    .searchbox input {
        flex: 1;
        min-width: 0;
        padding-top: 4px;
    }

    .searchbox input::placeholder { color: #b4b4b4; opacity: 1; }

    /* upper panels */
    .upper {
        flex: 476 1 0;
        min-height: 0;
        display: grid;
        grid-template-columns: 180fr 570fr 109fr;
        grid-template-rows: 100%;
        gap: 8px;
        padding: 4px 2px 0;
    }

    .panel {
        min-width: 0;
        min-height: 0;
        display: flex;
        flex-direction: column;
        background: var(--panel);
        overflow: hidden;
    }

    .tabs {
        flex: none;
        display: flex;
        height: 56px;
    }

    .project { padding: 0 76px 0 24px; }

    .tab {
        display: flex;
        align-items: center;
        gap: 18px;
        padding: 0 2px;
        color: #b4b4b4;
    }

    .tabs .tab { gap: 17px; }

    .underlined { box-shadow: inset 0 -4px var(--panel), inset 0 -8px #b5b5b5; }

    .tab-title { color: var(--bright); }

    .strong { font-weight: 500; }

    .chip { width: 21px; height: 20px; }
    .red-chip { background: #b53838; }
    .tan-chip { background: #ab9878; }

    .crumb {
        flex: none;
        padding: 10px 11px 7px;
        border-bottom: 2px solid #000;
    }

    .effect-body {
        flex: 1;
        display: flex;
        background: #252525;
    }

    .effect-list { flex: 1; }

    .effect-gutter { width: 34px; background: #222; }

    .effect-row {
        display: flex;
        align-items: center;
        box-sizing: border-box;
        height: 33px;
        border-bottom: 2px solid #212121;
        background: var(--panel);
    }

    .effect-row.head {
        height: 34px;
        padding-left: 13px;
        background: #222;
        font-weight: 500;
    }

    .effect-row.head a { font-weight: 400; }

    .effect-name { width: 321px; }

    .effect-watch { padding-left: 70px; }

    .effect-prop { width: 290px; padding-left: 6px; }

    .fx {
        font-style: italic;
        font-weight: 400;
        color: #c4c4c4;
    }

    .effect-row .fx { margin: 0 8px; padding: 4px; }

    .dark { background: #181818; }

    .swatches { display: flex; gap: 6px; }

    .swatch,
    .pick {
        box-sizing: border-box;
        width: 46px;
        height: 30px;
        border: 2px solid #8f8f8f;
        background: #e5ff4f;
        box-shadow: inset 0 0 0 2px #222;
    }

    .pick {
        display: flex;
        align-items: center;
        justify-content: center;
        background: none;
        color: #b4b4b4;
    }

    /* composition viewer */
    .comp .tab { padding-left: 20px; }

    .flowbar {
        flex: none;
        height: 50px;
        padding: 5px 0 0 40px;
        box-sizing: border-box;
        border-bottom: 2px solid #000;
    }

    .flowbar button {
        display: block;
        width: 138px;
        height: 35px;
        padding-left: 16px;
        background: #161616;
        border: 1px solid #333;
        border-radius: 4px;
        color: var(--blue);
        text-align: left;
    }

    .viewer {
        flex: 1;
        min-height: 0;
        display: grid;
        grid-template: 30px 1fr / 30px 1fr;
        margin: 2px 0 8px 2px;
    }

    .ruler-corner,
    .ruler-h,
    .ruler-v {
        background: #000;
        box-sizing: border-box;
        border: 0 solid #9a9a9a;
    }

    .ruler-corner {
        border-width: 0 3px 3px 0;
        background: linear-gradient(#9a9a9a, #9a9a9a) 17px 0 / 1px 100% no-repeat, linear-gradient(#9a9a9a, #9a9a9a) 0 17px / 100% 1px no-repeat, #000;
    }

    .ruler-h {
        width: 100%;
        height: 30px;
        border-bottom-width: 2px;
    }

    .ruler-v {
        width: 30px;
        height: 100%;
        border-right-width: 2px;
    }

    .viewer line {
        stroke: #a0a0a0;
        stroke-width: 2;
        shape-rendering: crispEdges;
    }

    .viewer line.mark { stroke: #2f8ceb; }

    .viewer text {
        font-size: 15px;
        fill: #8f8f8f;
    }

    .viewport {
        position: relative;
        background: #1f1f1f;
        overflow: hidden;
    }

    .stage {
        position: absolute;
        background: #000;
    }

    .shape {
        position: absolute;
        background: #e6ff00;
    }

    .null {
        position: absolute;
        box-sizing: border-box;
        border: 2px dotted #c85a1e;
    }

    .guide {
        position: absolute;
        top: 0;
        bottom: 0;
        width: 2px;
        background: #0b7c8c;
    }

    .viewbar {
        flex: none;
        display: flex;
        align-items: center;
        height: 44px;
        padding-left: 11px;
        border-top: 2px solid #161616;
        color: #b4b4b4;
    }

    .viewbar i {
        width: 2px;
        height: 30px;
        margin: 0 11px;
        background: #323232;
    }

    .viewtools {
        display: flex;
        align-items: center;
        margin: 0 -3px;
    }

    .viewtools button {
        display: flex;
        align-items: center;
        justify-content: center;
        width: 44px;
        height: 38px;
        border-radius: 4px;
    }

    .viewtools .dark { background: #161616; }

    .viewtools .lit { color: #2f8ceb; }

    .viewtools .off { color: #444; }

    .exposure a { padding: 0 25px 0 6px; }

    .timebox {
        height: 36px;
        padding: 0 17px;
        background: #1c1c1c;
        border: 1px solid #333;
        border-radius: 4px;
        color: #aaa;
    }

    .select {
        position: relative;
        display: block;
        box-sizing: border-box;
        height: 28px;
        background: #1c1c1c;
        color: #c8c8c8;
    }

    .select select {
        appearance: none;
        display: block;
        box-sizing: border-box;
        width: 100%;
        height: 100%;
        padding: 0 32px 0 12px;
        line-height: 24px;
    }

    .select .icon {
        position: absolute;
        right: 8px;
        top: calc(50% - 8px);
        pointer-events: none;
    }

    .select option { background: #1c1c1c; }

    .zoom,
    .res {
        height: 36px;
        border: 2px solid #2f2f2f;
        border-radius: 5px;
    }

    .zoom { width: 137px; }
    .res { width: 175px; }

    .res select { padding-left: 10px; }

    .mode { width: 138px; }
    .matte { width: 130px; }
    .link { width: 178px; }
    .blend { width: 254px; border: 1px solid #333; height: 30px; }

    /* side panels */
    .side { flex-direction: row; }

    .side-list {
        flex: 1;
        min-width: 0;
        overflow: hidden;
    }

    .side h2 {
        display: flex;
        align-items: center;
        justify-content: space-between;
        box-sizing: border-box;
        height: 60px;
        padding: 3px 19px 0 25px;
        border-bottom: 4px solid #171717;
        white-space: nowrap;
    }

    .side h2:first-child { height: 58px; }

    .side h2.on {
        border: 0;
        color: var(--bright);
        font-weight: 500;
    }

    .character { border-bottom: 2px solid #171717; }

    .fonts {
        display: flex;
        padding: 17px 10px 9px 10px;
    }

    .font-selects {
        flex: 1;
        display: flex;
        flex-direction: column;
        gap: 11px;
    }

    .font {
        height: 37px;
        border: 2px solid #2f2f2f;
        border-radius: 5px;
        background: linear-gradient(90deg, #161616 calc(100% - 35px), #2f2f2f calc(100% - 35px) calc(100% - 33px), #1f1f1f calc(100% - 33px));
    }

    .font .icon { right: 9px; }

    .font-pick {
        display: flex;
        flex-direction: column;
        gap: 12px;
        margin: 0 10px;
    }

    .bw {
        width: 40px;
        height: 34px;
        border: 2px solid #b4b4b4;
        background: linear-gradient(#000 45%, #b4b4b4 45% 55%, #fff 55%);
    }

    .fillstroke {
        position: relative;
        width: 86px;
        height: 86px;
    }

    .fillstroke > * {
        position: absolute;
        box-sizing: border-box;
    }

    .fill {
        left: 0;
        top: 0;
        width: 60px;
        height: 60px;
        background: #f6e968;
        border: 2px solid #000;
    }

    .stroke {
        right: 0;
        bottom: 0;
        width: 60px;
        height: 60px;
        border: 2px solid #000;
        background: linear-gradient(135deg, transparent 48%, #b51414 48% 52%, transparent 52%), linear-gradient(#222, #222) center / 22px 22px no-repeat, #fff;
    }

    .none {
        left: 1px;
        bottom: 4px;
        width: 23px;
        height: 22px;
        border: 2px solid #b4b4b4;
        background: linear-gradient(135deg, transparent 46%, #c84a4a 46% 54%, transparent 54%), #fff;
    }

    .swap { right: 0; top: 2px; }

    .char-grid {
        display: grid;
        grid-template-columns: 152px 1fr;
        column-gap: 56px;
        margin: 0 10px 0 11px;
        padding: 4px 0 10px;
        border-top: 2px solid #303030;
    }

    .single { padding: 8px 0 15px; column-gap: 10px; }

    .char-cell {
        display: flex;
        align-items: center;
        height: 43px;
    }

    .single .char-cell { height: 38px; }

    .char-icon {
        flex: none;
        margin-right: 10px;
        overflow: visible;
        color: #b4b4b4;
    }

    .char-num {
        flex: 1;
        text-align: left;
    }

    .char-num span { color: var(--blue); }

    .char-num .dim { color: #505050; }

    .char-cell:nth-child(even) .char-icon { margin-right: 24px; }

    .arrow {
        border: solid transparent;
        border-width: 12px 7px 0;
        border-top-color: #a0a0a0;
    }

    .char-cell:nth-child(even) .arrow { margin-right: 11px; }

    .order {
        height: 38px;
        border: 2px solid #2f2f2f;
        border-radius: 5px;
    }

    .faux {
        display: flex;
        margin: 0 10px 0 11px;
        padding: 15px 0 22px 39px;
        border-top: 2px solid #303030;
        font: 700 27px/28px "Liberation Serif", serif;
        color: #b4b4b4;
    }

    .faux button { width: 50px; height: 28px; }

    .faux button:nth-child(3),
    .faux button:nth-child(5) { margin-left: 10px; }

    .faux .heavy { -webkit-text-stroke: 2px #b4b4b4; }

    .faux em { font-style: italic; }

    .faux small { font-size: 20px; }

    .faux sup,
    .faux sub {
        font-size: 15px;
        line-height: 0;
    }

    .side-scroll {
        width: 26px;
        background: #1f1f1f;
        box-sizing: border-box;
        padding: 2px 2px 37px 3px;
    }

    .side-scroll span {
        display: block;
        height: 100%;
        border-radius: 10px;
        background: #333;
    }

    /* timeline */
    .timeline {
        flex: 552 1 0;
        min-height: 0;
        display: flex;
        flex-direction: column;
        box-sizing: border-box;
        margin: 8px 2px 0;
        border: 2px solid #3683d4;
        border-radius: 0 0 16px 16px;
        background: var(--panel);
        overflow: hidden;
    }

    .comp-tab {
        flex: none;
        height: 52px;
        padding-left: 18px;
    }

    .time-body {
        flex: 1;
        min-height: 0;
        display: grid;
        grid-template-columns: 747fr 961fr 32px;
        grid-template-rows: 100%;
    }

    .outline {
        min-width: 0;
        overflow: hidden;
    }

    .time-controls {
        display: flex;
        align-items: center;
        height: 72px;
        padding-left: 22px;
    }

    .timecode {
        display: flex;
        flex-direction: column;
        gap: 4px;
        width: 178px;
        padding-top: 2px;
        color: #1d6aa8;
        font-size: 19px;
    }

    .timecode strong {
        padding-left: 4px;
        font-size: 30px;
        font-weight: 600;
        color: #409be0;
    }

    .time-controls .searchbox { width: 960px; }

    .tri {
        align-self: flex-end;
        margin-bottom: 10px;
        border: solid transparent;
        border-width: 6px 6px 0;
        border-top-color: #b4b4b4;
    }

    .comp-switches {
        display: flex;
        gap: 20px;
        padding-left: 30px;
        color: #b4b4b4;
    }

    .comp-switches button:first-child { margin-right: 17px; }

    .apart { margin-left: 16px; }

    .columns {
        display: flex;
        align-items: center;
        height: 36px;
        background: #333;
        border: solid #000;
        border-width: 2px 0;
        font-size: 17px;
    }

    .columns > span {
        display: flex;
        align-items: center;
        box-sizing: border-box;
        height: 22px;
        border-right: 2px solid #000;
        padding-left: 11px;
    }

    .columns .icon,
    .columns em { color: #b4b4b4; }

    .columns em { width: 22px; font-size: 21px; }

    .columns .c-av { width: 136px; gap: 7px; }
    .columns .c-label { width: 64px; padding-left: 26px; }
    .columns .c-num { width: 65px; font-style: italic; }
    .columns .c-name { width: 359px; }
    .columns .c-mode { width: 332px; }
    .columns .c-switch { width: 274px; gap: 7px; padding-left: 8px; }
    .columns .c-parent { width: 235px; padding-left: 10px; }

    .c-mode span:nth-child(1) { width: 151px; }
    .c-mode span:nth-child(2) { width: 34px; }

    .row {
        display: flex;
        align-items: center;
        box-sizing: border-box;
        height: 34px;
        border-bottom: 2px solid #1f1f1f;
        color: #9a9a9a;
    }

    .row.layer {
        background: #303030;
        color: #a6a6a6;
    }

    .av {
        display: flex;
        gap: 3px;
        box-sizing: border-box;
        width: 135px;
        padding-left: 8px;
    }

    .box {
        display: flex;
        align-items: center;
        justify-content: center;
        width: 26px;
        height: 26px;
        background: #1f1f1f;
        color: #b4b4b4;
    }

    .box.dark { background: #181818; }

    .box.clear { background: none; }

    .box.mute { color: #777; }

    .push { margin-left: 31px; }

    .layer-name {
        display: flex;
        align-items: center;
        box-sizing: border-box;
        width: 495px;
        padding-left: 13px;
        font-weight: 600;
    }

    .layer-chip { width: 24px; height: 24px; margin: 0 19px 0 6px; }

    .layer-num { width: 57px; font-weight: 500; }

    .solid-icon {
        width: 24px;
        height: 24px;
        margin-right: 11px;
        background: #fff;
        border: 2px solid #000;
    }

    .star-icon { width: 38px; color: #b4b4b4; }

    .modes {
        display: flex;
        gap: 11px;
        width: 334px;
    }

    .modes .box { height: 28px; }

    .switches {
        display: flex;
        gap: 4px;
        width: 275px;
    }

    .parent {
        display: flex;
        align-items: center;
        gap: 11px;
    }

    .prop-name {
        display: flex;
        align-items: center;
        box-sizing: border-box;
        width: 830px;
        padding-top: 2px;
    }

    .twirl { width: 16px; margin-right: 15px; }

    .twirl:has(+ .watch) { margin-right: 9px; }

    .watch { margin-right: 12px; }

    .prop-value {
        display: flex;
        align-items: center;
        gap: 4px;
        width: 299px;
    }

    .adder {
        display: flex;
        align-items: center;
        gap: 6px;
        padding-left: 180px;
    }

    .adder .icon { color: #b4b4b4; }

    .dir {
        height: 30px;
        padding: 0 3px;
        background: #1c1c1c;
    }

    .dir.lit { background: #161616; }

    .link-box { padding: 2px 0; margin-right: 5px; background: #1c1c1c; color: #b4b4b4; }

    .row > .icon { color: #a8a8a8; }

    .row.expression,
    .track.expression { height: 92px; }

    .row.expression { align-items: flex-start; }

    .exp-name {
        box-sizing: border-box;
        width: 996px;
        padding: 37px 0 0 348px;
    }

    .exp-tools {
        display: flex;
        align-items: center;
        gap: 9px;
        color: #b4b4b4;
    }

    .eq {
        padding: 5px;
        color: #2f8ceb;
        border: 1px solid #303030;
        margin-right: -4px;
    }

    .graph {
        position: relative;
        min-width: 0;
        display: flex;
        flex-direction: column;
        padding-top: 16px;
        border-left: 2px solid #000;
    }

    .navigator,
    .workarea {
        flex: none;
        padding: 0 2px 0 0;
        border: solid #000;
        border-width: 2px 0;
        border-radius: 12px 12px 0 0;
        background: #2f8ceb;
    }

    .navigator { height: 14px; }

    .navigator span,
    .workarea span {
        display: block;
        height: 100%;
        margin: 0 14px 0 12px;
        border: solid #161616;
        border-width: 0 2px;
        background: #676767;
    }

    .time-ruler {
        position: relative;
        flex: none;
        height: 36px;
        margin: 0 16px 0 14px;
        font-size: 20px;
    }

    .time-mark {
        position: absolute;
        top: 3px;
        bottom: 0;
        transform: translateX(-50%);
    }

    .time-mark::after {
        content: '';
        position: absolute;
        left: 50%;
        bottom: 1px;
        width: 2px;
        height: 10px;
        background: #8f8f8f;
    }

    .time-mark.whole::after { height: 15px; }

    .workarea {
        height: 30px;
        border-radius: 6px 6px 0 0;
    }

    .workarea span { background: #606060; }

    .cache {
        flex: none;
        height: 6px;
        padding: 0 16px 0 14px;
        border-bottom: 2px solid #000;
        background: var(--panel);
    }

    .cache span {
        display: block;
        height: 100%;
        background: #12c01c;
    }

    .tracks {
        flex: 1;
        margin-right: 2px;
        padding: 0 14px 0 14px;
        background: linear-gradient(90deg, #2b2b2b 14px, #343434 14px calc(100% - 14px), #282828 calc(100% - 14px));
    }

    .track {
        display: flex;
        align-items: center;
        box-sizing: border-box;
        height: 34px;
        margin: 0 -14px;
        padding: 0 14px;
        border-bottom: 2px solid #222;
    }

    .clip {
        flex: 1;
        height: 32px;
        background: #7b3a3b;
        box-shadow: inset 0 2px #864546, inset 0 -2px #6b2e30;
    }

    .clip.second {
        background: #505b8f;
        box-shadow: inset 0 2px #5d689c, inset 0 -2px #444e80;
    }

    .ibeam { margin-left: -7px; }

    .track.expression {
        align-items: flex-start;
        padding-right: 6px;
    }

    .editor {
        flex: 1;
        position: relative;
        z-index: 1;
        display: flex;
        height: 84px;
        margin: -4px 0 0 12px;
        background: linear-gradient(90deg, #1c1c1c 80px, #222 80px 108px, #1c1c1c 108px);
        font: 32px/46px "DejaVu Sans Mono", monospace;
        color: #ecd9a0;
    }

    .line-no {
        width: 109px;
        text-indent: 22px;
        font-size: 30px;
        color: #5f5f5f;
    }

    code { font: inherit; }

    code s { color: #a59b3c; text-decoration: none; }

    code q { color: #f08080; quotes: none; }

    .playhead {
        position: absolute;
        left: 2px;
        top: 42px;
        bottom: 0;
        width: 24px;
        background: linear-gradient(#2f8ceb, #2f8ceb) 11px 26px / 2px 100% no-repeat;
    }

    .markers {
        background: #222;
        color: #b4b4b4;
    }

    .comp-marker {
        display: block;
        height: 112px;
        box-sizing: border-box;
        padding: 78px 0 0 6px;
        background: #262626;
        border-bottom: 2px solid #000;
    }

    .button-marker { display: block; padding: 2px 0 0; }

    footer {
        flex: none;
        display: flex;
        height: 32px;
        border-top: 2px solid #000;
    }

    .foot-left {
        display: flex;
        align-items: center;
        gap: 15px;
        width: 1494px;
        padding-left: 12px;
        box-sizing: border-box;
        color: #a0a0a0;
    }

    .foot-left b {
        color: #6fd8b4;
        font-weight: 500;
        margin-left: 4px;
    }

    .foot-zoom {
        display: flex;
        align-items: center;
        gap: 20px;
        padding-left: 12px;
        color: #b4b4b4;
    }

    .foot-zoom input {
        appearance: none;
        width: 98px;
        height: 4px;
        background: #444;
    }

    .foot-zoom input::-webkit-slider-thumb {
        appearance: none;
        box-sizing: border-box;
        width: 20px;
        height: 20px;
        border: 4px solid #8f8f8f;
        border-radius: 50%;
        background: #282828;
    }
</style>
